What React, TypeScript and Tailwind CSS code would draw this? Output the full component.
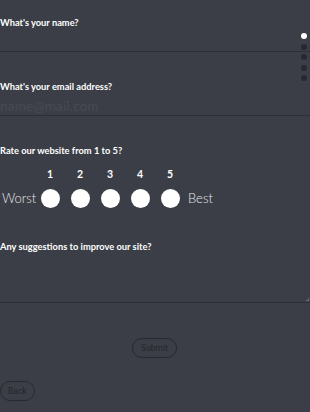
import React from "react";

export default function App() {
  const font = { fontFamily: "Lato, 'Open Sans', sans-serif" };
  return (
    <div className="relative w-[310px] h-[412px] bg-[#3b3e46] overflow-hidden text-white" style={font}>
      <div className="absolute right-[3px] top-[33px] flex flex-col gap-[4.5px]">
        <div className="w-[6px] h-[6px] rounded-full bg-white" />
        <div className="w-[6px] h-[6px] rounded-full bg-[#27292e]" />
        <div className="w-[6px] h-[6px] rounded-full bg-[#27292e]" />
        <div className="w-[6px] h-[6px] rounded-full bg-[#27292e]" />
        <div className="w-[6px] h-[6px] rounded-full bg-[#27292e]" />
      </div>
      <div className="flex flex-col">
        <div className="pt-[17px] text-[9.3px] font-bold leading-[11px]">What's your name?</div>
        <div className="h-[24px] border-b border-[#2d2f35]" />
        <div className="pt-[29px] text-[9.3px] font-bold leading-[11px]">What's your email address?</div>
        <div className="h-[24px] border-b border-[#2d2f35] flex items-end">
          <span className="text-[13.5px] leading-[18px] text-[#474a52] tracking-[0.2px]">name@mail.com</span>
        </div>
        <div className="pt-[29px] text-[9.3px] font-bold leading-[11px]">Rate our website from 1 to 5?</div>
        <div className="flex items-end mt-[12px]">
          <div className="w-[35px]" />
          {[1, 2, 3, 4, 5].map((n) => (
            <div key={n} className="w-[30px] flex justify-center text-[10.5px] font-bold leading-[12px]">{n}</div>
          ))}
        </div>
        <div className="flex items-center mt-[8px]">
          <div className="w-[35px] pl-[2px] text-[13px] font-light leading-[20px] text-[#e8e8ea]">Worst</div>
          {[1, 2, 3, 4, 5].map((n) => (
            <div key={n} className="w-[30px] flex justify-center">
              <div className="w-[19px] h-[19px] rounded-full bg-white" />
            </div>
          ))}
          <div className="pl-[3px] text-[13px] font-light leading-[20px] text-[#e8e8ea]">Best</div>
        </div>
        <div className="pt-[33px] text-[9.3px] font-bold leading-[11px]">Any suggestions to improve our site?</div>
        <div className="relative h-[51px] border-b border-[#2d2f35]">
          <div className="absolute right-[1px] bottom-[1px] w-[3px] h-[3px] border-r border-b border-[#6a6d75]" />
        </div>
        <div className="flex justify-center mt-[35px] pr-[1px]">
          <div className="h-[20px] px-[8px] rounded-full border border-[#27292e] text-[8.5px] leading-[18px] text-[#25272c]" style={{ fontFamily: "Roboto, sans-serif" }}>Submit</div>
        </div>
        <div className="flex mt-[23px]">
          <div className="h-[20px] px-[7px] rounded-full border border-[#27292e] text-[8.5px] leading-[18px] text-[#25272c]" style={{ fontFamily: "Roboto, sans-serif" }}>Back</div>
        </div>
      </div>
    </div>
  );
}
